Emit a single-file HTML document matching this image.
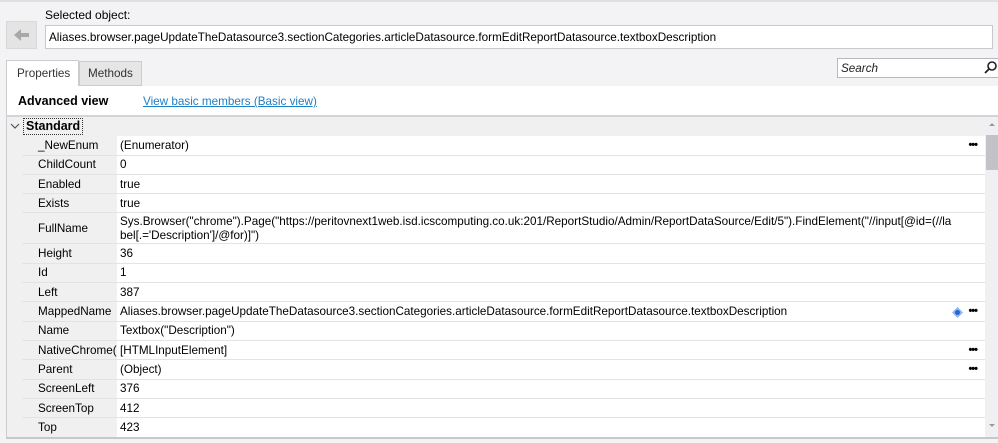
<!DOCTYPE html>
<html><head><style>
*{box-sizing:border-box;margin:0;padding:0}
body{width:998px;height:443px;background:#f3f3f5;font-family:"Liberation Sans",sans-serif;font-size:11.7px;color:#000;position:relative;overflow:hidden}
.abs{position:absolute}
.row{position:absolute;left:22px;width:963px;border-bottom:1px solid #e3e3e3}
.row .l{position:absolute;left:0;top:0;bottom:0;width:95px;background:#f0f0f0;padding-left:16px;white-space:nowrap;overflow:hidden;display:flex;align-items:center}
.row .v{position:absolute;left:95px;right:0;top:0;bottom:0;background:#fff;padding-left:3px;display:flex;align-items:center;white-space:nowrap}
.dots{position:absolute;right:8px;top:50%;margin-top:-2px;font-weight:bold;letter-spacing:-1px;font-size:11px;line-height:4px}
</style></head><body>
<div class="abs" style="left:0;top:0;width:998px;height:2px;background:#e0e0e0"></div>
<div class="abs" style="left:45px;top:8px;font-size:12px">Selected object:</div>
<div class="abs" style="left:6px;top:21px;width:31px;height:28px;background:#e4e4e4;border:1px solid #d8d8d8"></div>
<svg class="abs" style="left:12px;top:27px" width="20" height="16"><path d="M2 8 L9 2 L9 6 L17 6 L17 10 L9 10 L9 14 Z" fill="#a8a8a8"/></svg>
<div class="abs" style="left:45px;top:25px;width:948px;height:24px;background:#fff;border:1px solid #c8c8c8;padding:5px 0 0 3px">Aliases.browser.pageUpdateTheDatasource3.sectionCategories.articleDatasource.formEditReportDatasource.textboxDescription</div>
<div class="abs" style="left:6px;top:60px;width:73px;height:26px;background:#fff;border:1px solid #ccc;border-bottom:none;padding:6px 0 0 10px;color:#333">Properties</div>
<div class="abs" style="left:79px;top:61px;width:63px;height:25px;background:#e6e6e6;border:1px solid #ccc;padding:5px 0 0 8px;color:#333">Methods</div>
<div class="abs" style="left:837px;top:58px;width:162px;height:20px;background:#fff;border:1px solid #b8b8c0;padding:3px 0 0 3px;font-style:italic;color:#222">Search</div>
<svg class="abs" style="left:984px;top:60px" width="14" height="14"><circle cx="8" cy="6" r="4" fill="none" stroke="#222" stroke-width="1.6"/><line x1="5" y1="9" x2="1" y2="13" stroke="#222" stroke-width="1.8"/></svg>
<div class="abs" style="left:6px;top:86px;width:992px;height:351px;background:#fff;border-left:1px solid #ccc"></div>
<div class="abs" style="left:18px;top:94px;font-weight:bold;font-size:12.5px">Advanced view</div>
<div class="abs" style="left:143px;top:95px;color:#1f7fc4;text-decoration:underline">View basic members (Basic view)</div>
<div class="abs" style="left:6px;top:115px;width:992px;height:2px;background:#d4d4d8"></div>
<div class="abs" style="left:7px;top:117px;width:991px;height:19px;background:#f0f0f0"></div>
<svg class="abs" style="left:10px;top:122px" width="10" height="8"><path d="M1 2 L5 6 L9 2" fill="none" stroke="#555" stroke-width="1.2"/></svg>
<div class="abs" style="left:23px;top:118px;border:1px dotted #333;padding:0 2px;font-weight:bold;font-size:12.5px;line-height:15px">Standard</div>
<div class="abs" style="left:7px;top:136px;width:15px;height:301px;background:#f0f0f0"></div>
<div class="row" style="top:136px;height:19.5px"><div class="l">_NewEnum</div><div class="v">(Enumerator)<span class="dots">•••</span></div></div>
<div class="row" style="top:155.5px;height:19.5px"><div class="l">ChildCount</div><div class="v">0</div></div>
<div class="row" style="top:175px;height:19px"><div class="l">Enabled</div><div class="v">true</div></div>
<div class="row" style="top:194px;height:19px"><div class="l">Exists</div><div class="v">true</div></div>
<div class="row" style="top:213px;height:31px"><div class="l">FullName</div><div class="v" style="display:block;padding-top:2px;line-height:14px">Sys.Browser("chrome").Page("https://peritovnext1web.isd.icscomputing.co.uk:201/ReportStudio/Admin/ReportDataSource/Edit/5").FindElement("//input[@id=(//la<br>bel[.='Description']/@for)]")</div></div>
<div class="row" style="top:244px;height:19.5px"><div class="l">Height</div><div class="v">36</div></div>
<div class="row" style="top:263.5px;height:19.5px"><div class="l">Id</div><div class="v">1</div></div>
<div class="row" style="top:283px;height:19px"><div class="l">Left</div><div class="v">387</div></div>
<div class="row" style="top:302px;height:19.5px"><div class="l">MappedName</div><div class="v">Aliases.browser.pageUpdateTheDatasource3.sectionCategories.articleDatasource.formEditReportDatasource.textboxDescription<svg style="position:absolute;right:22px;top:5px" width="11" height="11"><path d="M5.5 0 L11 5.5 L5.5 11 L0 5.5 Z" fill="#8fb5ef"/><circle cx="5.5" cy="5.5" r="2.5" fill="#2a64d0"/></svg><span class="dots">•••</span></div></div>
<div class="row" style="top:321.5px;height:19.5px"><div class="l">Name</div><div class="v">Textbox("Description")</div></div>
<div class="row" style="top:341px;height:19px"><div class="l">NativeChrome(</div><div class="v">[HTMLInputElement]<span class="dots">•••</span></div></div>
<div class="row" style="top:360px;height:19.5px"><div class="l">Parent</div><div class="v">(Object)<span class="dots">•••</span></div></div>
<div class="row" style="top:379.5px;height:19.5px"><div class="l">ScreenLeft</div><div class="v">376</div></div>
<div class="row" style="top:399px;height:19px"><div class="l">ScreenTop</div><div class="v">412</div></div>
<div class="row" style="top:418px;height:19px;border:none"><div class="l">Top</div><div class="v">423</div></div>
<div class="abs" style="left:985px;top:117px;width:13px;height:320px;background:#f0f0f2"></div>
<div class="abs" style="left:986px;top:135px;width:12px;height:35px;background:#c2c3c9"></div>
<div class="abs" style="left:989px;top:123px;width:0;height:0;border-left:3px solid transparent;border-right:3px solid transparent;border-bottom:3px solid #999"></div>
<div class="abs" style="left:989px;top:424px;width:0;height:0;border-left:3px solid transparent;border-right:3px solid transparent;border-top:3px solid #999"></div>
<div class="abs" style="left:6px;top:437px;width:992px;height:2px;background:#c8c8cc"></div>
</body></html>
